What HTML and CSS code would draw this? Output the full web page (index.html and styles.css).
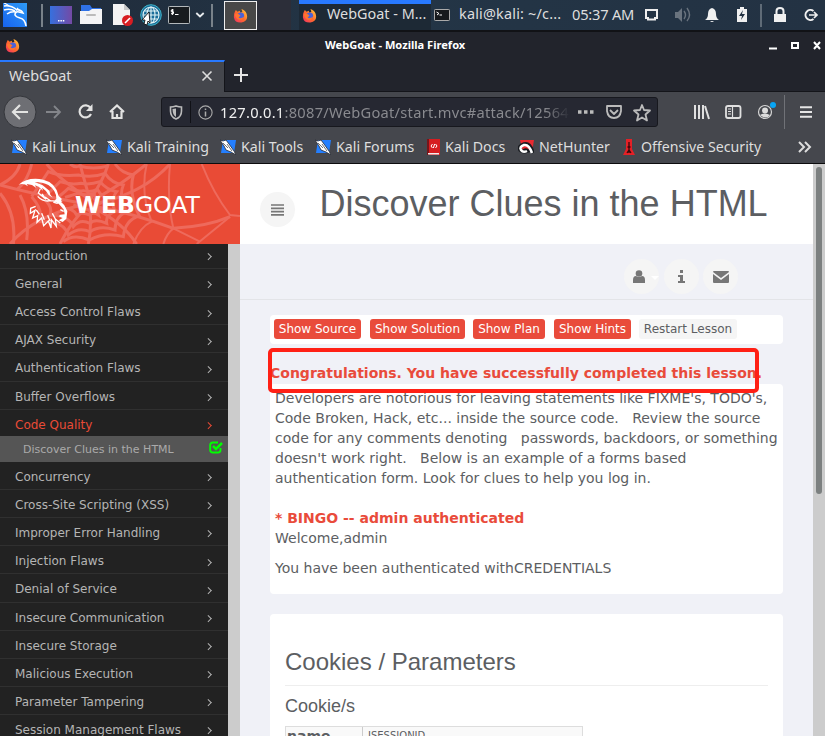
FILE: index.html
```html
<!DOCTYPE html>
<html lang="en">
<head>
<meta charset="utf-8">
<title>WebGoat</title>
<link rel="stylesheet" href="styles.css">
</head>
<body>
<svg class="defs" width="0" height="0">
  <defs>
    <linearGradient id="ffg" x1="0" y1="1" x2="1" y2="0"><stop offset="0" stop-color="#f02f67"/><stop offset=".5" stop-color="#ff6b2b"/><stop offset="1" stop-color="#ffd541"/></linearGradient>
    <linearGradient id="kb" x1="0" y1="1" x2="1" y2="0"><stop offset="0" stop-color="#1763ef"/><stop offset="1" stop-color="#2e9bf6"/></linearGradient>
    <linearGradient id="desk" x1="0" y1="0" x2="1" y2="0"><stop offset="0" stop-color="#3670de"/><stop offset="1" stop-color="#744aa5"/></linearGradient>
    <symbol id="fox" viewBox="0 0 16 16"><path d="M2 4 3 2 5 4 7 3 8 5 10 4 9 1Q13 2 14.5 6 17 14 9 15.5 2 16 1 10 .8 6 2 4Z" fill="url(#ffg)"/><circle cx="8.3" cy="8.3" r="3.5" fill="#4a62d9"/><path d="M2 6Q5 5 8 8L6 10Q8 12 12 9 10 14 5 12 2 10 2 6Z" fill="#ff752e"/></symbol>
    <symbol id="kali" viewBox="0 0 16 16"><path d="M3 1H16L14 14H1Z" fill="#247fff"/><path d="M0 1 3 2 6 1 9 5 14 12 16 16 11 13 6 11 4 7Z" fill="#fff" stroke="#242832" stroke-width=".8"/><path d="m3 4 5 5m-1-4 5 7" stroke="#444a54" stroke-width=".8"/></symbol>
  </defs>
</svg>

<div class="panel">
  <div class="launchers">
    <svg class="i-kali" width="24" height="24" viewBox="0 0 24 24"><path fill="url(#kb)" d="M0 0h24v24H0z"/><g fill="none" stroke="#fff"><path stroke-width="1.5" d="M1 3q7-1 13 4M1 7q6-2 11 1M4 11q4-3 9-2"/><path stroke-width="1.6" d="M13 7q5-1 7 3l-4-1q-4-1-4 3 1 2 5 3 5 1 6 8"/><path stroke-width="1.1" d="M14 5 17 8M6 3Q4 1 1 0"/></g></svg>
    <i class="psep"></i>
    <svg class="i-desk" width="22" height="18" viewBox="0 0 22 18"><path fill="url(#desk)" d="M0 0h22v18H0z"/><path fill="#fff" d="M8 14h1.5v1.5H8zm2.4 0h1.5v1.5h-1.5zm2.4 0h1.5v1.5h-1.5z"/></svg>
    <svg class="i-folder" width="22" height="20" viewBox="0 0 22 20"><path fill="#2f71e6" d="M1 0h9l2 3h9v6H1z"/><path fill="#f4f4f5" d="M0 6h9l3-2h10v15H0z"/><rect x="6" y="9" width="10" height="2" rx="1" fill="#bbb"/></svg>
    <svg class="i-doc" width="22" height="22" viewBox="0 0 22 22"><path fill="#f3f3f3" d="M1 0h11l6 6v15H1z"/><path fill="#c9c9c9" d="m12 0 6 6h-6z"/><circle cx="15.5" cy="16.5" r="5.5" fill="#d81d22"/><path d="m13 19 5-5" stroke="#fff" stroke-width="1.6"/></svg>
    <svg class="i-globe" width="22" height="22" viewBox="0 0 22 22"><circle cx="11" cy="11" r="10.3" fill="#1b6d9a" stroke="#3fb5c9"/><g fill="none" stroke="#e2f5f7" stroke-width="1.1"><circle cx="11" cy="11" r="8"/><ellipse cx="11" cy="11" rx="4" ry="8"/><path d="M11 3v16M3 11h16M4.5 7h13M4.5 15h13"/></g><path d="m9 8-7 8h3l-1 4 3 1 1-4 2 2z" fill="#fff" stroke="#111" stroke-width=".9"/></svg>
    <svg class="i-term" width="22" height="18" viewBox="0 0 22 18"><rect x=".5" y=".5" width="21" height="17" rx=".8" fill="#171b1f" stroke="#b3b8bb"/><path d="M5.7 4H3.3v1.7h2.2v2H3M4.4 3v6M7 8.5h3.5" fill="none" stroke="#fff"/></svg>
    <svg class="i-chev" width="10" height="8" viewBox="0 0 10 8"><path d="m1.3 2 3.7 3.5L8.7 2" fill="none" stroke="#e7ebee" stroke-width="1.8"/></svg>
    <i class="psep b"></i>
  </div>
  <div class="foxbox"><svg width="15" height="15"><use href="#fox"/></svg></div>
  <div class="gap"></div>
  <div class="task"><svg width="15" height="15"><use href="#fox"/></svg><span>WebGoat - M...</span></div>
  <div class="task2"><svg width="16" height="12" viewBox="0 0 16 12"><rect x=".5" y=".5" width="15" height="11" rx=".7" fill="#16191c" stroke="#aaa"/><path d="M2.500 3 5 4.500l-2 1.500m2.500 0H8" fill="none" stroke="#fff"/></svg><span>kali@kali: ~/c...</span></div>
  <div class="clock">05:37 AM</div>
  <div class="tray">
    <svg width="181" height="30" viewBox="644 0 181 30"><path d="M646 10h11v8h-2v1.500h-7V18h-2z" fill="none" stroke="#eee" stroke-width="2"/><g fill="#69737e"><path d="M675 12h3l4-4v14l-4-4h-3z"/><path d="M684 11q3 4 0 8M687 8q5 7 0 13" fill="none" stroke="#69737e" stroke-width="1.400"/></g><path fill="#f0f0f0" d="M705 20q3-2 3-6 0-5 4-6 4 1 4 6 0 4 3 6zm5 1h4q-2 2-4 0M737 9h3V7h4v2h3v13h-10z"/><path d="m743 10-4 6h3l-1 4 4-6h-3z" fill="#213041"/><path d="M761 4v23" stroke="#747f88" stroke-width="1.500"/><path fill="#f0f0f0" d="M774 14h12v8h-12z"/><path d="M776.500 14v-3q0-3 3.500-3t3.500 3v3M813.500 11a5 5 0 1 0 0 8" fill="none" stroke="#f0f0f0" stroke-width="2"/><path d="M809 15h7m-2-3 3 3-3 3" fill="none" stroke="#f0f0f0" stroke-width="1.700"/></svg>
  </div>
</div>

<div class="titlebar">
  <svg class="tfox" width="15" height="15"><use href="#fox"/></svg>
  <span class="wtitle">WebGoat - Mozilla Firefox</span>
  <svg class="wbtn" width="56" height="12" viewBox="0 0 56 12"><path d="M1 8.500h8M24 3h6v5h-6zM46 2l6 7m0-7-6 7" fill="none" stroke="#fff" stroke-width="2"/></svg>
</div>

<div class="tabs">
  <div class="tab"><span>WebGoat</span><svg width="12" height="12" viewBox="0 0 12 12"><path d="m1.500 1.500 9 9m0-9-9 9" stroke="#ddd" stroke-width="1.600"/></svg></div>
  <svg class="plus" width="16" height="16" viewBox="0 0 16 16"><path d="M8 1v14M1 8h14" stroke="#e5e5e5" stroke-width="2"/></svg>
</div>

<div class="nav">
  <svg class="navl" width="161" height="40" viewBox="0 92 161 40"><circle cx="20" cy="112" r="16" fill="#6e6f74" stroke="#34363b"/><g fill="none" stroke="#e3e3e2" stroke-width="2.200"><path d="M28 112H13m7-7-7 7 7 7"/><path d="M46 112h14m-6-6 6 6-6 6" stroke="#83858a" stroke-width="1.800"/><path d="M90.500 108a6 6 0 1 0 .5 6"/><path d="m110 112 7-6.500 7 6.500M112.500 111v7h9v-7M117 118v-4"/></g><path fill="#e3e3e2" d="M92.500 104v7H86z"/></svg>
  <div class="url">
    <svg class="shield" width="14" height="15" viewBox="0 0 14 15"><path d="M1.500 2Q4 2 7 .9 10 2 12.500 2v4q0 6-5.500 8-5.500-2-5.500-8z" fill="none" stroke="#bbb" stroke-width="1.600"/><path d="M7 3.500v8.500Q3.500 10 3.500 4z" fill="#bbb"/></svg>
    <i></i>
    <svg class="info" width="15" height="15" viewBox="0 0 15 15"><circle cx="7.500" cy="7.500" r="6.600" fill="none" stroke="#aaa" stroke-width="1.100"/><path d="M7.500 3.500v1.500m0 1.500v5" stroke="#aaa" stroke-width="1.500"/></svg>
    <span class="addr"><b>127.0.0.1</b>:8087/WebGoat/start.mvc#attack/12564</span>
    <svg class="uacts" width="76" height="20" viewBox="576 102 76 20"><path d="M578 112h3.500m2.500 0h3.500m2.500 0h3.500" stroke="#bbb" stroke-width="3.500"/><path d="M607 106h14v5q-1 7-7 7t-7-7zm3 4 4 4 4-4M642 105l2 5 6 .5-4.500 4 1.500 6-5-3-5 3 1.500-6-4.500-4 6-.5z" fill="none" stroke="#bbb" stroke-width="1.800" stroke-linejoin="round"/></svg>
  </div>
  <svg class="navr" width="167" height="40" viewBox="658 92 167 40"><path d="M695 105v14m4-14v14m4-14v14m2-13 4 13" stroke="#e0e0e0" stroke-width="2"/><rect x="726" y="106" width="14.500" height="12" rx="2" fill="none" stroke="#e0e0e0" stroke-width="1.800"/><path d="M732.500 106v12M728 109h3m-3 2.500h3m-3 2.500h3" stroke="#e0e0e0" stroke-width="1.200"/><circle cx="765" cy="112" r="6.500" fill="none" stroke="#d5d5d5" stroke-width="1.200"/><circle cx="765" cy="110.500" r="3" fill="#ddd"/><path d="M760 115q5-3 10 0-4 5-10 0" fill="#ddd"/><circle cx="773" cy="105" r="3" fill="#08a5f4"/><path d="M784.500 95v34" stroke="#707277"/><path d="M800 107.200h12m-12 4.800h12m-12 4.800h12" stroke="#e5e5e5" stroke-width="2"/></svg>
</div>

<div class="marks">
  <div class="m1"><svg width="16" height="16"><use href="#kali"/></svg><span>Kali Linux</span></div>
  <div class="m2"><svg width="16" height="16"><use href="#kali"/></svg><span>Kali Training</span></div>
  <div class="m3"><svg width="16" height="16"><use href="#kali"/></svg><span>Kali Tools</span></div>
  <div class="m4"><svg width="16" height="16"><use href="#kali"/></svg><span>Kali Forums</span></div>
  <div class="m5"><svg width="13" height="16" viewBox="0 0 13 16"><path fill="#d61d20" d="M0 0h13v16H0z"/><path fill="#77151a" d="M0 0h2v16H0z"/><path fill="#eee" d="M1 14h11v1.500H1z"/><path d="M5.500 5 4 7l1.500 2m3-4L10 7 8.500 9M7.600 5 6.400 9" fill="none" stroke="#fff"/></svg><span>Kali Docs</span></div>
  <div class="m6"><svg width="16" height="16" viewBox="0 0 16 16"><path d="M2 1h14l-2 12H5z" fill="#e82a31"/><path d="M15 14Q12 3 6 5 0 7 2 11q3 3 8 1-3-2-4 0" fill="none" stroke="#181b20" stroke-width="3.500"/><path d="M14 14Q11 5 6 6 1 8 3 11q2 3 6 1" fill="none" stroke="#fff" stroke-width="2.500"/></svg><span>NetHunter</span></div>
  <div class="m7"><svg width="14" height="16" viewBox="0 0 14 16"><path d="M4 0h6v10l3 6H1l3-6z" fill="#e52026"/><path d="M7 3v11M5.500 8h3M5 14l2-3 2 3" stroke="#34090c" stroke-width="1.300" fill="none"/></svg><span>Offensive Security</span></div>
  <svg class="more" width="14" height="12" viewBox="0 0 14 12"><path d="m1 1 5 5-5 5m6-10 5 5-5 5" fill="none" stroke="#ddd" stroke-width="2"/></svg>
</div>

<div class="page">
  <aside>
    <div class="brand">
      <svg class="web" width="240" height="80" viewBox="0 12 720 240"><g fill="none" stroke="#ee6a5c" stroke-width="9">
        <path d="M270 120Q170 50 140 12M270 120Q250 50 240 12M270 120Q310 60 325 12M280 120Q370 70 440 12M290 130Q430 100 510 12M290 140Q400 160 520 205 620 200 690 170M285 145Q370 190 410 252M270 145Q275 205 265 252M255 145Q210 190 180 252M245 135Q100 170 30 252M245 130Q90 100 0 75"/>
        <path stroke-width="6" d="M605 12Q640 100 690 165L720 168M690 170 590 252M520 205 600 245M510 12Q500 120 520 205 500 220 490 252M440 12Q420 100 455 185 420 200 400 252"/>
        <path d="M0 75Q50 50 60 12M0 100Q50 160 40 252M50 90Q85 60 95 12M60 105Q90 160 80 240M95 110Q125 65 145 35 180 50 235 45 275 55 315 40 335 70 370 75 355 110 380 155 345 170 345 210 300 195 270 215 235 200 205 225 190 180 120 185 130 150 95 110"/>
        <path d="M130 115Q155 90 180 65 210 75 243 70 270 75 300 65 320 90 350 95 330 120 345 155 315 165 320 190 285 175 270 190 240 175 220 200 205 165 150 165 160 140 130 115M165 118Q190 100 205 85 225 95 250 92 270 98 292 88 305 110 320 115 308 130 315 145 290 150 295 165 280 155 270 165 245 155 230 165 220 145 190 145 190 130 165 118M345 12Q365 40 400 45 385 100 418 168 375 180 370 230 315 215 268 240 220 220 190 245M210 12Q225 24 238 18 280 30 325 18M195 112Q220 105 232 100 255 108 282 102 288 120 300 130 280 140 270 152 245 142 220 135"/>
      </g></svg>
      <div class="brandtext"><svg width="50" height="52" viewBox="54 54 150 156">
        <path fill="#fff" d="M56 74Q84 50 130 59 168 68 176 108L185 116 183 126 193 136 202 154 199 176 188 186 176 181 188 174 176 169 181 164 194 163 191 148 176 131 163 124 169 116Q169 91 145 75 128 66 104 66L128 76 148 92 151 104 158 113 146 105Q139 91 126 83L129 92 116 80 105 76 109 84 96 75 80 72 84 79Q71 69 56 74Z"/>
        <g fill="none" stroke="#fff" stroke-width="4" stroke-linejoin="miter"><path d="M121 86 115 99 138 118 126 102M113 109Q130 127 151 122L135 111M151 122 181 125 171 130 160 126"/><path d="M107 139 92 145 91 160 105 151 98 174 113 167 111 187 125 174 131 197 145 183 153 204 154 179 169 199 166 177 181 189M109 150 118 163M125 160 133 179M143 166 150 183M157 160 166 177M181 149 191 154"/></g></svg><span><b>WEB</b>GOAT</span></div>
    </div>
    <div class="menuwrap">
      <ul class="menu">
        <li>Introduction<i></i></li><li>General<i></i></li><li>Access Control Flaws<i></i></li><li>AJAX Security<i></i></li><li>Authentication Flaws<i></i></li><li>Buffer Overflows<i></i></li>
        <li class="active">Code Quality<i></i></li>
        <li class="sub">Discover Clues in the HTML<svg width="14" height="13" viewBox="0 0 14 13"><path d="M9 1.500H4Q1.200 1.500 1.200 4v5Q1.200 11.500 4 11.500h5q2.500 0 2.500-2.500V7" fill="none" stroke="#0f0" stroke-width="1.900"/><path d="m4 5 3 3 6-6" fill="none" stroke="#0f0" stroke-width="2.500"/></svg></li>
        <li>Concurrency<i></i></li><li>Cross-Site Scripting (XSS)<i></i></li><li>Improper Error Handling<i></i></li><li>Injection Flaws<i></i></li><li>Denial of Service<i></i></li><li>Insecure Communication<i></i></li><li>Insecure Storage<i></i></li><li>Malicious Execution<i></i></li><li>Parameter Tampering<i></i></li><li>Session Management Flaws<i></i></li>
      </ul>
      <div class="sidescroll"></div>
    </div>
  </aside>
  <main>
    <header>
      <div class="round"><svg width="13" height="12" viewBox="0 0 13 12"><path d="M0 1h13M0 4.300h13M0 7.600h13M0 10.900h13" stroke="#777" stroke-width="1.700"/></svg></div>
      <h1>Discover Clues in the HTML</h1>
    </header>
    <div class="tools">
      <div class="round user"><svg width="28" height="14" viewBox="0 0 28 14"><circle cx="7" cy="3.500" r="3.300" fill="#777"/><path d="M1 13V10q0-4 3-4 3 2 6 0 3 0 3 4v3z" fill="#777"/><path d="M19 6h8l-4 4z" fill="#fff"/></svg></div>
      <div class="round"><svg width="7" height="13" viewBox="0 0 7 13"><path fill="#777" d="M2 0h3v3H2zM0 5h5v6h2v2H0v-2h2V7H0z"/></svg></div>
      <div class="round"><svg width="16" height="12" viewBox="0 0 16 12"><path fill="#777" d="M1 0h14q1 0 1 1L8 7 0 1q0-1 1-1M0 3l8 6 8-6v8q0 1-1 1H1q-1 0-1-1z"/></svg></div>
    </div>
    <div class="content">
      <div class="buttons"><a class="b1">Show Source</a><a class="b2">Show Solution</a><a class="b3">Show Plan</a><a class="b4">Show Hints</a><a class="b5">Restart Lesson</a></div>
      <div class="congrats">Congratulations. You have successfully completed this lesson.<div class="outline"></div></div>
      <section class="lesson"><p>Developers are notorious for leaving statements like FIXME's, TODO's,<br>Code Broken, Hack, etc... inside the source code. &nbsp; Review the source<br>code for any comments denoting &nbsp; passwords, backdoors, or something<br>doesn't work right. &nbsp; Below is an example of a forms based<br>authentication form. Look for clues to help you log in.</p>
        <p class="bingo">* BINGO -- admin authenticated</p><p>Welcome,admin</p><p class="auth">You have been authenticated withCREDENTIALS</p></section>
      <section class="cookies"><h2>Cookies / Parameters</h2><h3>Cookie/s</h3><div class="ctable"><b>name</b><span>JSESSIONID</span></div></section>
    </div>
  </main>
  <div class="scroll"><div></div></div>
</div>
</body>
</html>
```
FILE: styles.css
```css
* { box-sizing: border-box; }
body { margin: 0; width: 825px; height: 736px; overflow: hidden; font-family: "Noto Sans", sans-serif; font-size: 14.67px; color: #dedede; white-space: nowrap; }
svg { display: block; flex: none; }
.defs { position: absolute; }

.panel { display: flex; height: 32px; background: linear-gradient(90deg, #202b3a, #233546 45%, #233243); border-bottom: 2px solid #111216; }
.launchers { display: flex; width: 224px; flex: none; align-items: flex-start; padding-left: 3px; }
.i-kali { margin-top: 3px; }
.psep { width: 2px; height: 23px; margin: 4px 0 0 14px; background: #79828a; }
.i-desk { margin: 6px 0 0 7px; }
.i-folder { margin: 5px 0 0 8px; }
.i-doc { margin: 4px 0 0 10px; }
.i-globe { margin: 4px 0 0 6px; }
.i-term { margin: 6px 0 0 6px; }
.i-chev { margin: 11px 0 0 5px; }
.psep.b { margin-left: 6px; }
.foxbox { flex: none; width: 33px; height: 29px; margin-top: 1px; border: 1px solid #eee; background: #484848; padding: 6px 0 0 8px; }
.gap { flex: none; width: 34px; height: 30px; background: #2c2e39; }
.task { display: flex; flex: none; width: 132px; height: 30px; margin-left: 8px; padding: 4px 0 0 4px; background: #1d2935; border-top: 4px solid #2879ff; }
.task svg { margin-left: -1px; }
.task span { margin-left: 10px; margin-top: -5px; line-height: 22px; font-size: 14.4px; }
.task2 { display: flex; flex: none; width: 141px; padding: 9px 0 0 3px; }
.task2 span { margin-left: 9px; line-height: 22px; margin-top: -6px; font-size: 14.4px; letter-spacing: .2px; }
.clock { width: 72px; line-height: 28px; flex: none; letter-spacing: -.22px; }

.titlebar { display: flex; height: 28px; background: #22242c; }
.tfox { margin: 6px 0 0 5px; }
.wtitle { width: 443px; margin-left: 305px; font-weight: 700; font-size: 11.1px; line-height: 26px; color: #fff; }
.wbtn { margin-top: 8px; }
.tabs { display: flex; height: 32px; background: #22242c; border-bottom: 1px solid #14151a; }
.tab { display: flex; justify-content: space-between; align-items: center; width: 225px; height: 32px; padding: 0 11px 2px 9px; background: #45474d; border-top: 2px solid #2879ff; border-right: 1px solid #14151a; font-size: 14.4px; }
.tab span { position: relative; top: -1px; }
.plus { margin: 7px 0 0 8px; }
.nav { display: flex; height: 40px; background: #45474d; }
.url { display: flex; width: 497px; height: 30px; margin-top: 5px; border: 1px solid #17181e; border-radius: 3px; background: #262832; align-items: center; flex: none; padding-left: 7px; }
.url i { width: 1px; height: 22px; margin-left: 7px; background: #101116; }
.info { margin-left: 7px; }
.addr { width: 350px; margin: 0 6px 0 7px; overflow: hidden; color: #898a8f; letter-spacing: .27px; -webkit-mask-image: linear-gradient(90deg, #000 325px, transparent 350px); mask-image: linear-gradient(90deg, #000 325px, transparent 350px); }
.addr b { font-weight: 400; color: #f0f0f0; }
.marks { display: flex; height: 32px; background: #45474d; border-bottom: 1px solid #0c0c0d; padding: 0 0 1px 11px; align-items: center; font-size: 14.2px; }
.marks div { display: flex; flex: none; align-items: center; gap: 5px; }
.marks span { line-height: 20px; margin-top: -1px; }
.m1 { width: 95px; } .m2 { width: 114px; } .m3 { width: 95px; } .m4 { width: 112px; } .m5 { width: 91px; } .m6 { width: 104px; } .m7 { width: 176px; }

.page { display: flex; height: 572px; font-family: "DejaVu Sans", sans-serif; font-size: 14px; color: #5c5e62; }
aside { width: 240px; flex: none; }
.brand { display: grid; height: 80px; background: #e94b36; overflow: hidden; }
.web, .brandtext { grid-area: 1 / 1; }
.brandtext { display: flex; padding: 14px 0 0 18px; }
.brandtext span { font-size: 23.5px; line-height: 28px; margin: 13px 0 0 7px; color: #fff; }
.menuwrap { display: flex; height: 492px; overflow: hidden; }
.menu { list-style: none; margin: -3px 0 0; padding: 0; width: 228px; background: #222; font-size: 12px; color: #b5b5b5; }
.menu li { display: flex; justify-content: space-between; align-items: center; height: 28.12px; padding: 3px 18px 0 15px; border-bottom: 1px solid #303030; }
.menu li i { width: 4.500px; height: 4.500px; border: solid currentColor; border-width: 1px 1px 0 0; transform: rotate(45deg); margin-top: 1px; }
.menu .active { height: 26.300px; border: 0; padding-top: 4px; color: #e94b36; }
.menu .sub { height: 26px; border: 0; padding: 1px 5px 0 23px; background: #555; color: #aaa; font-size: 11px; }
.sub svg { margin-top: -4px; }
.sidescroll { width: 12px; background: #ccc; }
main { width: 573px; flex: none; background: #f0f1f7; }
header { display: flex; height: 80px; background: #fff; padding-left: 20px; }
.round { display: flex; width: 35px; height: 35px; border-radius: 50%; background: #f5f5f5; align-items: center; justify-content: center; flex: none; }
header .round { margin-top: 28px; }
h1, h2, h3 { margin: 0; font-family: "Liberation Sans", sans-serif; font-weight: 400; }
h1 { font-size: 36px; line-height: 40px; margin: 20px 0 0 24.500px; }
.tools { display: flex; height: 56px; padding: 15px 0 0 384px; border-bottom: 1px solid #e3e4e8; gap: 4.500px; }
.round.user { padding-left: 8px; }
.content { padding: 15px 30px 0; }
.buttons { display: flex; height: 29px; padding: 4px; border-radius: 4px; background: #fff; font-size: 12px; }
.buttons a { height: 20px; line-height: 20px; text-align: center; color: #fff; background: #e94b3b; border-radius: 3px; }
.b1 { width: 87px; } .b2 { width: 95px; margin-left: 9px; } .b3 { width: 72px; margin-left: 8px; } .b4 { width: 77px; margin-left: 9px; }
.buttons .b5 { width: 98px; margin-left: 8px; color: #5c5e62; background: #f5f5f5; }
.congrats { position: relative; height: 40px; line-height: 20px; padding-top: 19px; font-weight: 700; color: #e94b3b; }
.outline { position: absolute; left: -2px; top: 4px; width: 491px; height: 45px; border: 4px solid #ff2015; border-radius: 5px; }
.lesson { height: 210px; padding: 4px 5px; border-radius: 4px; background: #fff; line-height: 20px; }
.lesson p { margin: 0; }
.lesson .bingo { margin-top: 20px; font-weight: 700; color: #e94b3b; }
.lesson .auth { margin-top: 10px; }
.cookies { height: 122px; margin-top: 20px; padding: 30px 15px 0; border-radius: 4px 4px 0 0; background: #fff; }
h2 { font-size: 24px; line-height: 36px; height: 42px; border-bottom: 1px solid #eee; }
h3 { font-size: 18px; line-height: 20px; margin-top: 10px; }
.ctable { display: flex; width: 298px; height: 30px; margin-top: 10px; border: 1px solid #ddd; background: #f9f9f9; }
.ctable b { width: 77px; line-height: 18px; border-right: 1px solid #ccc; padding-left: 1px; }
.ctable span { font-size: 10px; line-height: 18px; padding-left: 5px; }
.scroll { width: 12px; padding: 3px; background: #ccc; }
.scroll div { width: 6px; height: 327px; border-radius: 3px; background: #7c8080; }
```
